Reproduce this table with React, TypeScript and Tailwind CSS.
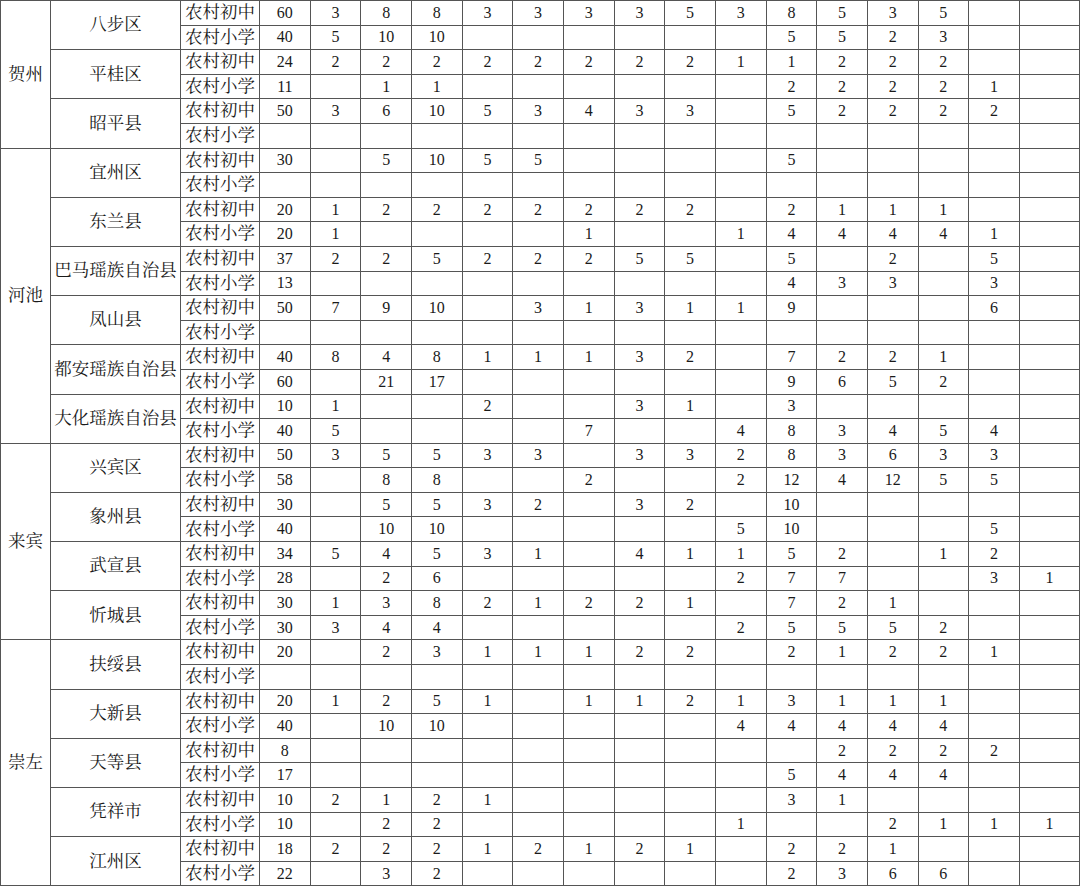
import React from 'react';

type Row = (number | null)[];

interface County {
  name: string;
  junior: Row;
  primary: Row;
}

interface City {
  name: string;
  counties: County[];
}

const _ = null;

const cities: City[] = [
  {
    name: '贺州',
    counties: [
      { name: '八步区', junior: [60, 3, 8, 8, 3, 3, 3, 3, 5, 3, 8, 5, 3, 5, _, _], primary: [40, 5, 10, 10, _, _, _, _, _, _, 5, 5, 2, 3, _, _] },
      { name: '平桂区', junior: [24, 2, 2, 2, 2, 2, 2, 2, 2, 1, 1, 2, 2, 2, _, _], primary: [11, _, 1, 1, _, _, _, _, _, _, 2, 2, 2, 2, 1, _] },
      { name: '昭平县', junior: [50, 3, 6, 10, 5, 3, 4, 3, 3, _, 5, 2, 2, 2, 2, _], primary: [_, _, _, _, _, _, _, _, _, _, _, _, _, _, _, _] }
    ]
  },
  {
    name: '河池',
    counties: [
      { name: '宜州区', junior: [30, _, 5, 10, 5, 5, _, _, _, _, 5, _, _, _, _, _], primary: [_, _, _, _, _, _, _, _, _, _, _, _, _, _, _, _] },
      { name: '东兰县', junior: [20, 1, 2, 2, 2, 2, 2, 2, 2, _, 2, 1, 1, 1, _, _], primary: [20, 1, _, _, _, _, 1, _, _, 1, 4, 4, 4, 4, 1, _] },
      { name: '巴马瑶族自治县', junior: [37, 2, 2, 5, 2, 2, 2, 5, 5, _, 5, _, 2, _, 5, _], primary: [13, _, _, _, _, _, _, _, _, _, 4, 3, 3, _, 3, _] },
      { name: '凤山县', junior: [50, 7, 9, 10, _, 3, 1, 3, 1, 1, 9, _, _, _, 6, _], primary: [_, _, _, _, _, _, _, _, _, _, _, _, _, _, _, _] },
      { name: '都安瑶族自治县', junior: [40, 8, 4, 8, 1, 1, 1, 3, 2, _, 7, 2, 2, 1, _, _], primary: [60, _, 21, 17, _, _, _, _, _, _, 9, 6, 5, 2, _, _] },
      { name: '大化瑶族自治县', junior: [10, 1, _, _, 2, _, _, 3, 1, _, 3, _, _, _, _, _], primary: [40, 5, _, _, _, _, 7, _, _, 4, 8, 3, 4, 5, 4, _] }
    ]
  },
  {
    name: '来宾',
    counties: [
      { name: '兴宾区', junior: [50, 3, 5, 5, 3, 3, _, 3, 3, 2, 8, 3, 6, 3, 3, _], primary: [58, _, 8, 8, _, _, 2, _, _, 2, 12, 4, 12, 5, 5, _] },
      { name: '象州县', junior: [30, _, 5, 5, 3, 2, _, 3, 2, _, 10, _, _, _, _, _], primary: [40, _, 10, 10, _, _, _, _, _, 5, 10, _, _, _, 5, _] },
      { name: '武宣县', junior: [34, 5, 4, 5, 3, 1, _, 4, 1, 1, 5, 2, _, 1, 2, _], primary: [28, _, 2, 6, _, _, _, _, _, 2, 7, 7, _, _, 3, 1] },
      { name: '忻城县', junior: [30, 1, 3, 8, 2, 1, 2, 2, 1, _, 7, 2, 1, _, _, _], primary: [30, 3, 4, 4, _, _, _, _, _, 2, 5, 5, 5, 2, _, _] }
    ]
  },
  {
    name: '崇左',
    counties: [
      { name: '扶绥县', junior: [20, _, 2, 3, 1, 1, 1, 2, 2, _, 2, 1, 2, 2, 1, _], primary: [_, _, _, _, _, _, _, _, _, _, _, _, _, _, _, _] },
      { name: '大新县', junior: [20, 1, 2, 5, 1, _, 1, 1, 2, 1, 3, 1, 1, 1, _, _], primary: [40, _, 10, 10, _, _, _, _, _, 4, 4, 4, 4, 4, _, _] },
      { name: '天等县', junior: [8, _, _, _, _, _, _, _, _, _, _, 2, 2, 2, 2, _], primary: [17, _, _, _, _, _, _, _, _, _, 5, 4, 4, 4, _, _] },
      { name: '凭祥市', junior: [10, 2, 1, 2, 1, _, _, _, _, _, 3, 1, _, _, _, _], primary: [10, _, 2, 2, _, _, _, _, _, 1, _, _, 2, 1, 1, 1] },
      { name: '江州区', junior: [18, 2, 2, 2, 1, 2, 1, 2, 1, _, 2, 2, 1, _, _, _], primary: [22, _, 3, 2, _, _, _, _, _, _, 2, 3, 6, 6, _, _] }
    ]
  }
];

const cellBase = 'border border-[#555] p-0 text-center align-middle';
const cnText = 'text-[17.5px] leading-none whitespace-nowrap';
const numText = 'text-[16px] leading-none';

const NumCells: React.FC<{ values: Row }> = ({ values }) => (
  <>
    {values.map((v, i) => (
      <td key={i} className={`${cellBase} ${numText}`}>
        {v ?? ''}
      </td>
    ))}
  </>
);

export default function App() {
  return (
    <div
      className="w-[1080px] h-[886px] bg-white text-[#1a1a1a] overflow-hidden"
      style={{ fontFamily: '"Liberation Serif", "Noto Serif CJK SC", "Noto Sans CJK SC", serif' }}
    >
      <table className="table-fixed border-collapse w-[1080px]">
        <colgroup>
          <col className="w-[50px]" />
          <col className="w-[130px]" />
          <col className="w-[79px]" />
          {Array.from({ length: 15 }).map((_, i) => (
            <col key={i} className="w-[50.67px]" />
          ))}
          <col />
        </colgroup>
        <tbody>
          {cities.map((city) =>
            city.counties.map((county, ci) => (
              <React.Fragment key={city.name + county.name}>
                <tr className="h-[24.6px]">
                  {ci === 0 && (
                    <td rowSpan={city.counties.length * 2} className={`${cellBase} ${cnText}`}>
                      {city.name}
                    </td>
                  )}
                  <td rowSpan={2} className={`${cellBase} ${cnText}`}>
                    {county.name}
                  </td>
                  <td className={`${cellBase} ${cnText}`}>农村初中</td>
                  <NumCells values={county.junior} />
                </tr>
                <tr className="h-[24.6px]">
                  <td className={`${cellBase} ${cnText}`}>农村小学</td>
                  <NumCells values={county.primary} />
                </tr>
              </React.Fragment>
            ))
          )}
        </tbody>
      </table>
    </div>
  );
}
